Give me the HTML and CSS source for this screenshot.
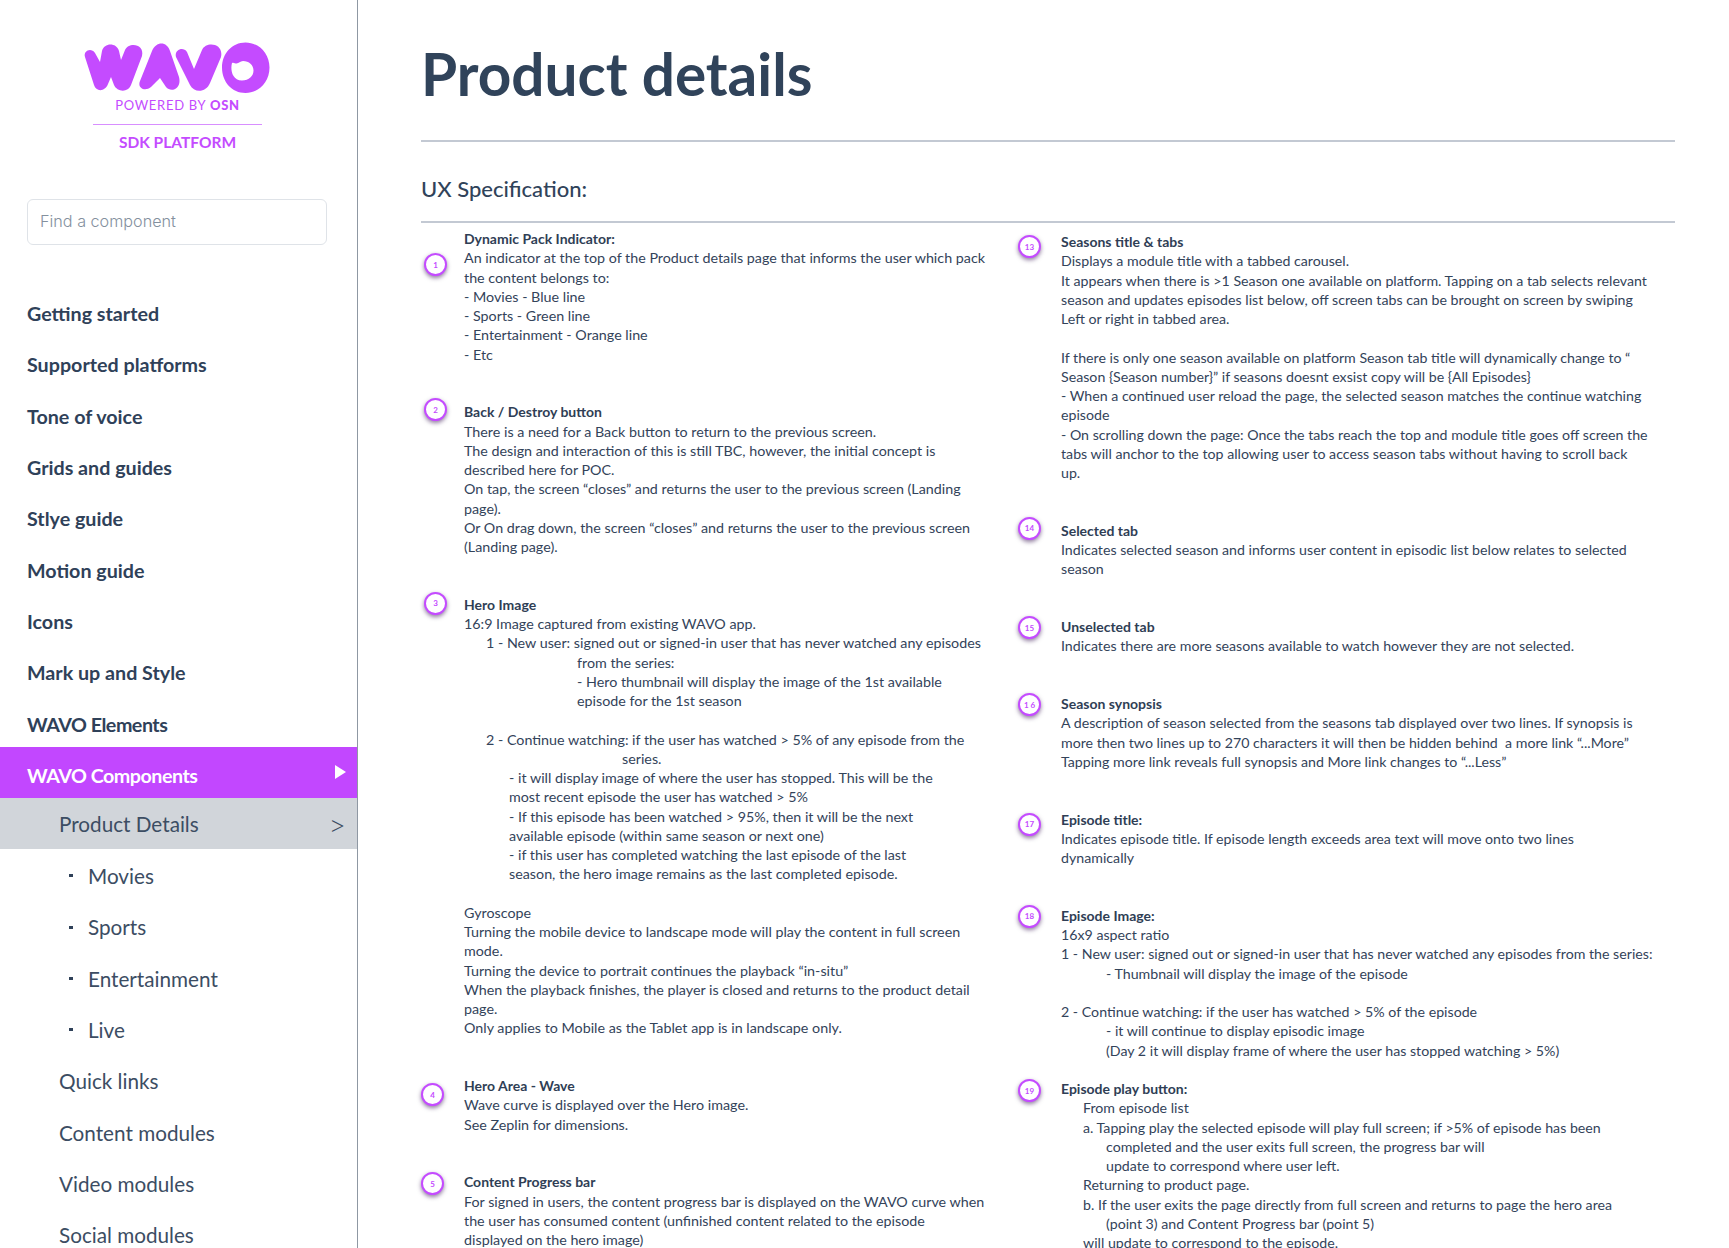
FILE: index.html
```html
<!DOCTYPE html>
<html lang="en">
<head>
  <meta charset="UTF-8">
  <meta name="viewport" content="width=device-width, initial-scale=1.0">
  <title>WAVO SDK Platform - Product details</title>
  <link rel="stylesheet" href="styles.css">
</head>
<body>
  <div class="page">
    <aside class="sidebar">
      <div class="brand">
        <svg class="brand-logo" viewBox="0 0 205 60" role="img" aria-label="WAVO">
          <path d="M10 22C8 16 16 12 20 18L25 27L27 16C29 8 41 7 44 16L46 25L50 15C53 7 70 8 67 21L56 50C53 58 42 57 39 50L36 42L33 49C30 57 21 57 19 50Z"/>
          <path d="M65 46L77 16C81 6 92 6 95 16L104 42C107 54 96 58 91 52L85 43L76 52C70 57 62 53 65 46Z"/>
          <path d="M101 22C99 15 108 11 112 17L119 34L127 15C131 6 149 8 146 22L135 48C131 58 119 58 115 50Z"/>
          <path fill-rule="evenodd" d="M170.500 7.500C184 7.500 194.500 18.500 194.500 32.500C194.500 47 184 58 170.500 58C157 58 147 47 147 32.500C147 18.500 157 7.500 170.500 7.500ZM157 28C155.500 33 156 45 167 45.500C174 45.500 178.500 41 178.500 35.500C178.500 30 174 26 168 26C165 26 164 28.500 161.500 28.500C160 28.500 158.500 27 157 28Z"/>
        </svg>
        <div class="brand-powered">POWERED BY <b>OSN</b></div>
        <div class="brand-rule"></div>
        <div class="brand-sdk">SDK PLATFORM</div>
      </div>

      <input class="search" type="text" placeholder="Find a component">

      <nav class="nav">
        <a class="nav-item">Getting started</a>
        <a class="nav-item">Supported platforms</a>
        <a class="nav-item">Tone of voice</a>
        <a class="nav-item">Grids and guides</a>
        <a class="nav-item">Stlye guide</a>
        <a class="nav-item">Motion guide</a>
        <a class="nav-item">Icons</a>
        <a class="nav-item">Mark up and Style</a>
        <a class="nav-item tight">WAVO Elements</a>
        <a class="nav-item tight active">WAVO Components<span class="arrow"></span></a>
        <a class="nav-sub current">Product Details<span class="chevron">&gt;</span></a>
        <a class="nav-sub leaf">Movies</a>
        <a class="nav-sub leaf">Sports</a>
        <a class="nav-sub leaf">Entertainment</a>
        <a class="nav-sub leaf">Live</a>
        <a class="nav-sub">Quick links</a>
        <a class="nav-sub">Content modules</a>
        <a class="nav-sub">Video modules</a>
        <a class="nav-sub">Social modules</a>
      </nav>
    </aside>

    <main class="main">
      <h1>Product details</h1>
      <h2>UX Specification:</h2>

      <div class="spec">
        <div class="spec-col left">
          <section class="note">
            <span class="badge b1">1</span>
            <div>
              <h3>Dynamic Pack Indicator:</h3>
              <p>An indicator at the top of the Product details page that informs the user which pack<br>
              the content belongs to:<br>
              - Movies - Blue line<br>
              - Sports - Green line<br>
              - Entertainment - Orange line<br>
              - Etc</p>
            </div>
          </section>

          <section class="note">
            <span class="badge b2">2</span>
            <div>
              <h3>Back / Destroy button</h3>
              <p>There is a need for a Back button to return to the previous screen.<br>
              The design and interaction of this is still TBC, however, the initial concept is<br>
              described here for POC.<br>
              On tap, the screen “closes” and returns the user to the previous screen (Landing<br>
              page).<br>
              Or On drag down, the screen “closes” and returns the user to the previous screen<br>
              (Landing page).</p>
            </div>
          </section>

          <section class="note">
            <span class="badge b3">3</span>
            <div>
              <h3>Hero Image</h3>
              <p>16:9 Image captured from existing WAVO app.</p>
              <p class="in-1">1 - New user: signed out or signed-in user that has never watched any episodes</p>
              <p class="in-4">from the series:<br>
              - Hero thumbnail will display the image of the 1st available<br>
              episode for the 1st season</p>
              <p class="in-1 gap">2 - Continue watching: if the user has watched &gt; 5% of any episode from the</p>
              <p class="in-5">series.</p>
              <p class="in-2">- it will display image of where the user has stopped. This will be the<br>
              most recent episode the user has watched &gt; 5%<br>
              - If this episode has been watched &gt; 95%, then it will be the next<br>
              available episode (within same season or next one)<br>
              - if this user has completed watching the last episode of the last<br>
              season, the hero image remains as the last completed episode.</p>
              <p class="gap">Gyroscope<br>
              Turning the mobile device to landscape mode will play the content in full screen<br>
              mode.<br>
              Turning the device to portrait continues the playback “in-situ”<br>
              When the playback finishes, the player is closed and returns to the product detail<br>
              page.<br>
              Only applies to Mobile as the Tablet app is in landscape only.</p>
            </div>
          </section>

          <section class="note">
            <span class="badge b4">4</span>
            <div>
              <h3>Hero Area - Wave</h3>
              <p>Wave curve is displayed over the Hero image.<br>
              See Zeplin for dimensions.</p>
            </div>
          </section>

          <section class="note">
            <span class="badge b5">5</span>
            <div>
              <h3>Content Progress bar</h3>
              <p>For signed in users, the content progress bar is displayed on the WAVO curve when<br>
              the user has consumed content (unfinished content related to the episode<br>
              displayed on the hero image)</p>
            </div>
          </section>
        </div>

        <div class="spec-col right">
          <section class="note">
            <span class="badge b13">13</span>
            <div>
              <h3>Seasons title &amp; tabs</h3>
              <p>Displays a module title with a tabbed carousel.<br>
              It appears when there is &gt;1 Season one available on platform. Tapping on a tab selects relevant<br>
              season and updates episodes list below, off screen tabs can be brought on screen by swiping<br>
              Left or right in tabbed area.</p>
              <p class="gap">If there is only one season available on platform Season tab title will dynamically change to “<br>
              Season {Season number}” if seasons doesnt exsist copy will be {All Episodes}<br>
              - When a continued user reload the page, the selected season matches the continue watching<br>
              episode<br>
              - On scrolling down the page: Once the tabs reach the top and module title goes off screen the<br>
              tabs will anchor to the top allowing user to access season tabs without having to scroll back<br>
              up.</p>
            </div>
          </section>

          <section class="note">
            <span class="badge b14">14</span>
            <div>
              <h3>Selected tab</h3>
              <p>Indicates selected season and informs user content in episodic list below relates to selected<br>
              season</p>
            </div>
          </section>

          <section class="note">
            <span class="badge b15">15</span>
            <div>
              <h3>Unselected tab</h3>
              <p>Indicates there are more seasons available to watch however they are not selected.</p>
            </div>
          </section>

          <section class="note">
            <span class="badge b16">1 6</span>
            <div>
              <h3>Season synopsis</h3>
              <p>A description of season selected from the seasons tab displayed over two lines. If synopsis is<br>
              more then two lines up to 270 characters it will then be hidden behind&nbsp; a more link “...More”<br>
              Tapping more link reveals full synopsis and More link changes to “...Less”</p>
            </div>
          </section>

          <section class="note">
            <span class="badge b17">17</span>
            <div>
              <h3>Episode title:</h3>
              <p>Indicates episode title. If episode length exceeds area text will move onto two lines<br>
              dynamically</p>
            </div>
          </section>

          <section class="note">
            <span class="badge b18">18</span>
            <div>
              <h3>Episode Image:</h3>
              <p>16x9 aspect ratio<br>
              1 - New user: signed out or signed-in user that has never watched any episodes from the series:</p>
              <p class="in-2">- Thumbnail will display the image of the episode</p>
              <p class="gap">2 - Continue watching: if the user has watched &gt; 5% of the episode</p>
              <p class="in-2">- it will continue to display episodic image<br>
              (Day 2 it will display frame of where the user has stopped watching &gt; 5%)</p>
            </div>
          </section>

          <section class="note close">
            <span class="badge b19">19</span>
            <div>
              <h3>Episode play button:</h3>
              <p class="in-1">From episode list<br>
              a. Tapping play the selected episode will play full screen; if &gt;5% of episode has been</p>
              <p class="in-2">completed and the user exits full screen, the progress bar will<br>
              update to correspond where user left.</p>
              <p class="in-1">Returning to product page.<br>
              b. If the user exits the page directly from full screen and returns to page the hero area</p>
              <p class="in-2">(point 3) and Content Progress bar (point 5)</p>
              <p class="in-1">will update to correspond to the episode.</p>
            </div>
          </section>
        </div>
      </div>
    </main>
  </div>
</body>
</html>
```

FILE: styles.css
```css
* {
  box-sizing: border-box;
}
body {
  margin: 0;
  font-family: Lato, "Open Sans", sans-serif;
  color: #33435a;
  background-color: #fff;
}
.page {
  display: flex;
  height: 100vh;
  overflow: hidden;
}

/* sidebar */
.sidebar {
  flex: 0 0 358px;
  border-right: 1px solid #8f98a3;
  padding-top: 35px;
}
.brand {
  display: flex;
  flex-direction: column;
  align-items: center;
  padding-right: 2px;
  color: #c44bff;
}
.brand-logo {
  width: 205px;
  height: 60px;
  fill: #c44bff;
}
.brand-powered {
  margin-top: 2px;
  font-size: 13px;
  line-height: 16px;
  letter-spacing: 0.7px;
}
.brand-powered b {
  font-weight: 900;
}
.brand-rule {
  width: 169px;
  height: 1px;
  margin-top: 11px;
  background-color: #d88fff;
}
.brand-sdk {
  margin-top: 7px;
  font-size: 15.5px;
  line-height: 20px;
  font-weight: 700;
}
.search {
  display: block;
  width: 300px;
  height: 46px;
  margin: 47px 0 0 27px;
  padding: 0 12px 2px;
  border: 1px solid #dfe3e8;
  border-radius: 6px;
  font-family: Inter, sans-serif;
  font-size: 16.2px;
  font-weight: 300;
}
.search::placeholder {
  color: #84909e;
  opacity: 1;
}
.nav {
  margin-top: 40px;
}
.nav-item,
.nav-sub {
  display: flex;
  align-items: center;
  justify-content: space-between;
  height: 51.3px;
  padding: 6px 11px 0 27px;
  font-size: 19.7px;
  font-weight: 700;
  color: #2f4159;
}
.nav-item.tight {
  letter-spacing: -0.5px;
}
.nav-sub {
  padding: 2.5px 11px 0 59px;
  font-size: 20.7px;
  font-weight: 400;
  color: #3c4d63;
}
.nav-item.active {
  color: #fff;
  background-color: #c247ff;
}
.arrow {
  width: 0;
  height: 0;
  margin-top: -6px;
  border-left: 11px solid #fff;
  border-top: 7px solid transparent;
  border-bottom: 7px solid transparent;
}
.nav-sub.current {
  padding-top: 1px;
  background-color: #d1d5da;
}
.chevron {
  font-size: 30px;
  line-height: 1;
  font-weight: 300;
  color: #3c4d63;
}
.nav-sub.leaf {
  justify-content: flex-start;
  padding-left: 88px;
  position: relative;
}
.nav-sub.leaf::before {
  content: "";
  position: absolute;
  left: 69px;
  top: 25px;
  width: 4px;
  height: 3px;
  background-color: #2f4159;
}

/* main column */
.main {
  flex: 1;
  padding: 43px 54px 0 63px;
}
h1 {
  margin: 0 0 37px;
  font-size: 58.500px;
  line-height: 60px;
  font-weight: 700;
  color: #30435a;
}
h2 {
  margin: 0;
  padding: 34px 0 19px;
  border-top: 2px solid #c3c9d3;
  border-bottom: 2px solid #c3c9d3;
  font-size: 22px;
  line-height: 26px;
  font-weight: 500;
  color: #30435a;
}
.spec {
  display: grid;
  grid-template-columns: 597px 1fr;
  padding-top: 6px;
  white-space: nowrap;
}
.spec-col.right {
  padding-top: 3px;
}
.note {
  display: grid;
  grid-template-columns: 43px 1fr;
  margin-bottom: 38.5px;
  font-size: 14.2px;
  line-height: 19.25px;
}
.left .note {
  font-size: 14.3px;
}
.note.close {
  margin-top: -19.25px;
}
.note h3 {
  margin: 0;
  font-size: 14px;
  line-height: 19.25px;
  font-weight: 700;
  color: #2f3e55;
}
.note p {
  margin: 0;
}
.note p.gap {
  margin-top: 19.25px;
}
.in-1 {
  padding-left: 22px;
}
.in-2 {
  padding-left: 45px;
}
.in-4 {
  padding-left: 113px;
}
.in-5 {
  padding-left: 158px;
}

/* numbered markers */
.badge {
  display: flex;
  align-items: center;
  justify-content: center;
  width: 23px;
  height: 23px;
  border: 2px solid #c44bff;
  border-radius: 50%;
  background-color: #fff;
  box-shadow: 0 2px 4px rgba(40, 0, 70, 0.5);
  font-size: 8px;
  line-height: 1;
  font-weight: 700;
  color: #c44bff;
}
.left .badge {
  margin-left: 3px;
}
.left .b4,
.left .b5 {
  margin-left: 0;
}
.b1 { margin-top: 24px; }
.b2, .b14 { margin-top: -4px; }
.b3 { margin-top: -3px; }
.b4 { margin-top: 7px; }
.b5, .b19 { margin-top: 0; }
.b13, .b17 { margin-top: 3px; }
.b15, .b16, .b18 { margin-top: -1px; }
```
